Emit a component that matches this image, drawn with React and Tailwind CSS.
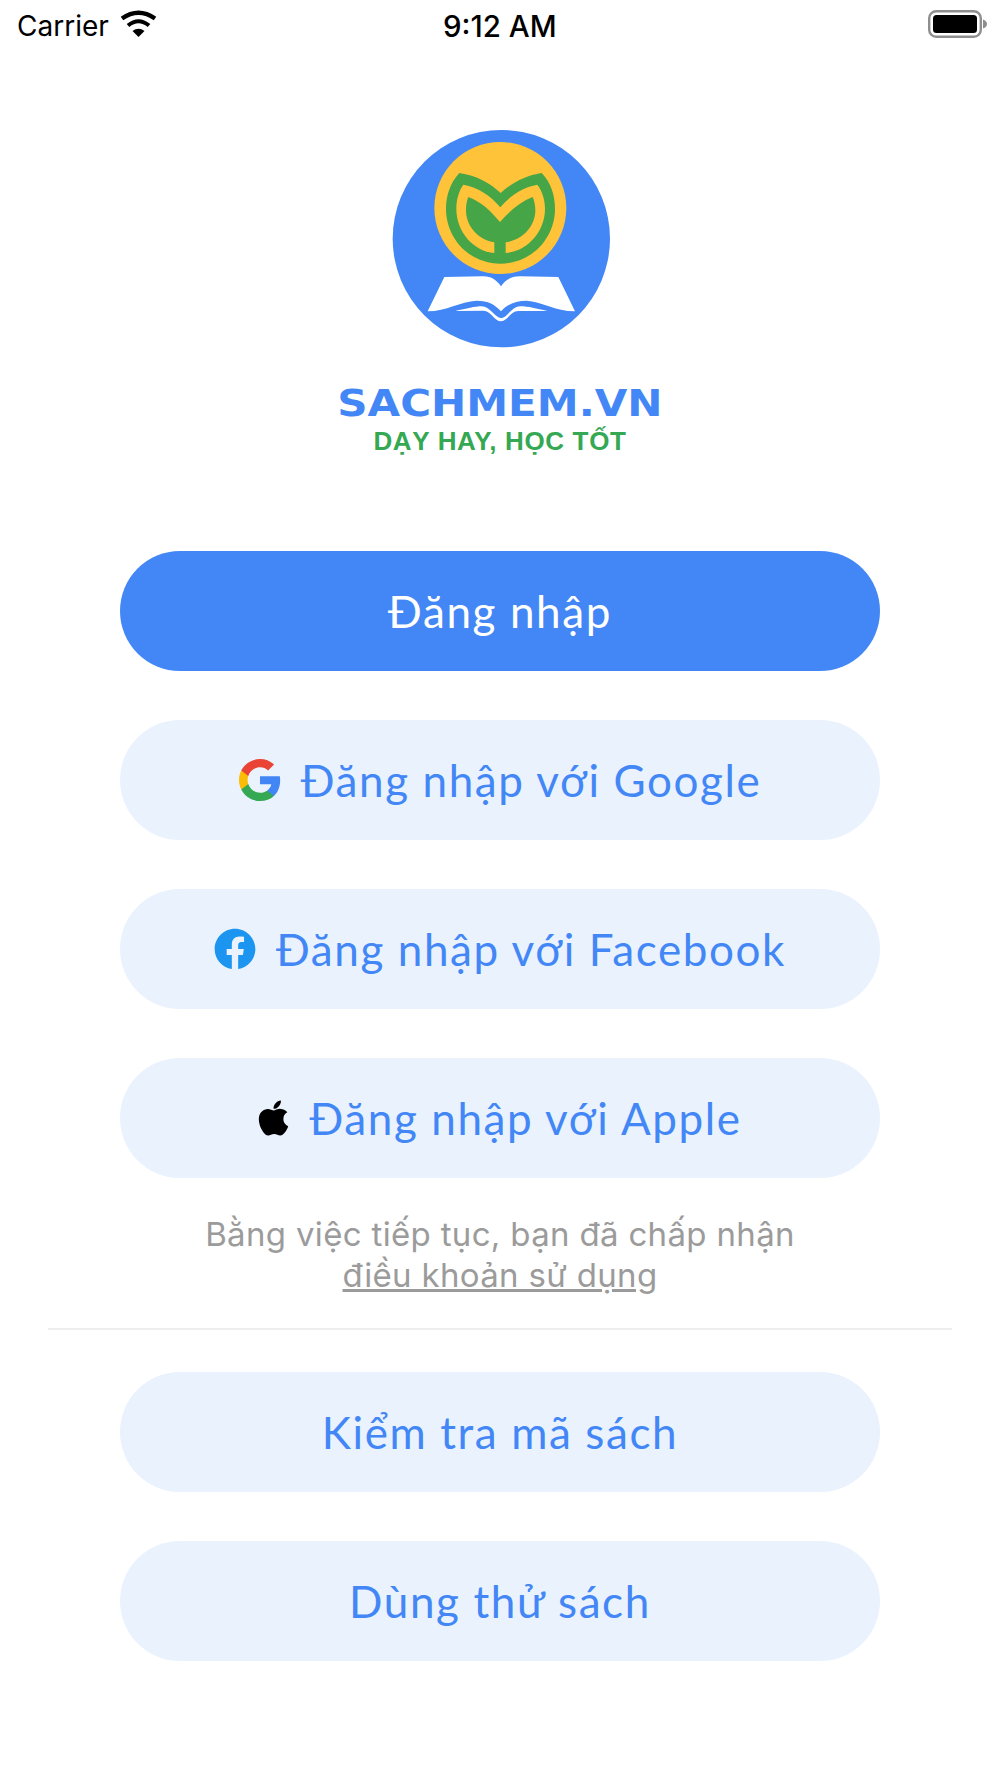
import React from 'react';
import { FaApple, FaFacebook } from 'react-icons/fa';

function GoogleIcon() {
  return (
    <svg viewBox="1 1 22 22" className="w-[42px] h-[42px] shrink-0">
      <path fill="#4285F4" d="M22.56 12.25c0-.78-.07-1.53-.2-2.25H12v4.26h5.92c-.26 1.37-1.04 2.53-2.21 3.31v2.77h3.57c2.08-1.92 3.28-4.74 3.28-8.09z" />
      <path fill="#34A853" d="M12 23c2.97 0 5.46-.98 7.28-2.66l-3.57-2.77c-.98.66-2.23 1.06-3.71 1.06-2.86 0-5.29-1.93-6.16-4.53H2.18v2.84C3.99 20.53 7.7 23 12 23z" />
      <path fill="#FBBC05" d="M5.84 14.09c-.22-.66-.35-1.36-.35-2.09s.13-1.43.35-2.09V7.07H2.18C1.43 8.55 1 10.22 1 12s.43 3.45 1.18 4.93l2.85-2.22.81-.62z" />
      <path fill="#EA4335" d="M12 5.38c1.62 0 3.06.56 4.21 1.64l3.15-3.15C17.45 2.09 14.97 1 12 1 7.7 1 3.99 3.47 2.18 7.07l3.66 2.84c.87-2.6 3.3-4.53 6.16-4.53z" />
    </svg>
  );
}

function LogoMark() {
  return (
    <svg viewBox="210 55 660 666" className="w-[220px] h-[222px] overflow-visible">
      <circle cx="544" cy="387" r="326" fill="#4387f6" />
      <circle cx="541" cy="295" r="198" fill="#fec338" />
      {/* leaf */}
      <path
        fill="#46a546"
        d="M418 190C470 198 510 220 542 250C575 220 615 198 665 190C692 218 705 256 705 297C705 388 632 462 541 462C450 462 378 388 378 297C378 256 392 218 418 190Z"
      />
      <path
        fill="#fec338"
        d="M523 430C462 425 409 368 409 297C409 270 416 245 430 225C475 233 512 258 541 293C570 258 608 233 652 225C667 245 675 270 675 297C675 368 620 425 557 430V398C605 392 646 352 646 302C646 288 643 274 638 262C600 276 568 306 540 337C514 306 484 276 445 262C440 274 438 288 438 302C438 352 478 392 523 398Z"
      />
      {/* book */}
      <path
        fill="#fff"
        d="M373 502L490 500C515 500 530 512 543 530C556 512 572 500 600 500L715 502L765 605C705 605 665 575 620 573C585 573 561 585 543 605C525 585 505 573 470 573C420 575 380 605 323 605Z"
      />
      <path
        fill="#fff"
        d="M405 604C440 597 465 590 485 590C510 590 525 625 543 625C561 625 576 590 600 590C625 590 650 597 682 604L595 604C572 604 562 635 543 635C524 635 514 604 490 603Z"
      />
    </svg>
  );
}

function PillButton({ icon, children, primary }) {
  return (
    <button
      className={`w-[760px] h-[120px] rounded-[60px] flex items-center justify-center gap-5 text-[44px] tracking-[1.6px] font-['Lato','Noto_Sans',sans-serif] ${
        primary ? 'bg-[#4387f6] text-white' : 'bg-[#eaf2fe] text-[#4387f6]'
      }`}
    >
      {icon}
      <span>{children}</span>
    </button>
  );
}

export default function App() {
  return (
    <div className="w-[1000px] h-[1778px] bg-white flex flex-col overflow-hidden">
      {/* status bar */}
      <div className="h-[53px] pl-[17px] pr-[13px] flex items-center justify-between relative font-['Inter',sans-serif] text-black text-[28px]">
        <div className="flex items-center gap-[11px]">
          <span className="mb-[2px]">Carrier</span>
          <svg viewBox="0 0 37 27" className="w-[37px] h-[27px] mb-[6px]">
            <path fill="none" stroke="#000" strokeWidth="4.4" d="M2 8.5Q18.5 -3 35 8.5" />
            <path fill="none" stroke="#000" strokeWidth="4" d="M8 15.5Q18.5 7 29 15.5" />
            <path fill="#000" d="M12.5 21Q18.5 16.5 24.5 21L18.5 27Z" />
          </svg>
        </div>
        <span className="absolute left-[443px] font-medium text-[29.5px]">9:12 AM</span>
        <svg viewBox="0 0 59 28" className="w-[59px] h-[28px] mb-[5px]">
          <rect x="1.2" y="1.2" width="51.6" height="25.6" rx="7" fill="none" stroke="#8e8e8e" strokeWidth="2.4" />
          <rect x="5" y="5" width="44" height="18" rx="3.5" fill="#000" />
          <path d="M55 9.5C57.5 10.5 59 12 59 14S57.5 17.5 55 18.5Z" fill="#8e8e8e" />
        </svg>
      </div>

      {/* logo */}
      <div className="flex flex-col items-center mt-[75px]">
        <LogoMark />
        <div className="mt-[34px] h-[38px] leading-[38px] text-[#4387f6] font-bold text-[38px] scale-x-[1.107] font-['DejaVu_Sans',sans-serif]">
          SACHMEM.VN
        </div>
        <div className="mt-[4px] h-[30px] leading-[30px] text-[#34a853] font-bold text-[26px] tracking-[0.65px] font-['Liberation_Sans',sans-serif]">
          DẠY HAY, HỌC TỐT
        </div>
      </div>

      {/* buttons */}
      <div className="flex flex-col items-center mt-[95px] gap-[49px]">
        <PillButton primary>Đăng nhập</PillButton>
        <PillButton icon={<GoogleIcon />}>Đăng nhập với Google</PillButton>
        <PillButton icon={<FaFacebook className="w-[42px] h-[42px] text-[#1b95f0] shrink-0" />}>Đăng nhập với Facebook</PillButton>
        <PillButton icon={<FaApple className="w-[31px] h-[40px] text-black shrink-0" />}>Đăng nhập với Apple</PillButton>
      </div>

      <div className="mt-[36px] text-center text-[#9b9b9b] text-[33px] tracking-[0.33px] leading-[41px] font-['Inter',sans-serif]">
        <div>Bằng việc tiếp tục, bạn đã chấp nhận</div>
        <div className="underline">điều khoản sử dụng</div>
      </div>

      <div className="mx-[48px] mt-[32px] h-[2px] bg-[#eeeeee]" />

      <div className="flex flex-col items-center mt-[42px] gap-[49px]">
        <PillButton>Kiểm tra mã sách</PillButton>
        <PillButton>Dùng thử sách</PillButton>
      </div>
    </div>
  );
}
